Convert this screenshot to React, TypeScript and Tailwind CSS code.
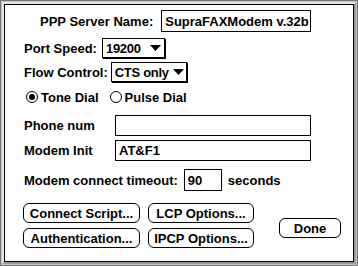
import React from "react";

const font = "font-['Liberation_Sans',Arial,sans-serif] font-bold text-[13px] leading-none text-black";

function Field({ value, className }: { value?: string; className: string }) {
  return (
    <div className={`h-[21px] border border-black bg-white flex items-center pl-[3px] overflow-hidden whitespace-nowrap ${className}`}>
      {value}
    </div>
  );
}

function Popup({ value, className }: { value: string; className: string }) {
  return (
    <div className={`h-[20px] border border-black bg-white shadow-[1px_1px_0_#000] flex items-center justify-between gap-[4px] pl-[3px] pr-[3px] whitespace-nowrap ${className}`}>
      <span className="tracking-[-0.3px]">{value}</span>
      <svg width="11" height="6" viewBox="0 0 11 6" className="shrink-0">
        <path d="M0 0 H11 L5.5 6 Z" fill="#000" />
      </svg>
    </div>
  );
}

function Radio({ checked, label }: { checked?: boolean; label: string }) {
  return (
    <div className="flex items-center gap-[3px]">
      <div className="w-[12px] h-[12px] rounded-full border border-black flex items-center justify-center bg-white">
        {checked && <div className="w-[6px] h-[6px] rounded-full bg-black" />}
      </div>
      <span>{label}</span>
    </div>
  );
}

function Button({ label, className }: { label: string; className: string }) {
  return (
    <div className={`h-[20px] border border-black rounded-[6px] bg-white flex items-center justify-center whitespace-nowrap ${className}`}>
      {label}
    </div>
  );
}

export default function App() {
  return (
    <div className={`w-[358px] h-[266px] ${font}`}>
      <div className="w-full h-full border border-[#777] bg-[#c4c4c4] p-[1px]">
        <div className="w-full h-full border-l-2 border-t-2 border-[#e8e8e8] border-r-2 border-b-2 border-r-[#999] border-b-[#999]">
          <div className="w-full h-full border border-black bg-white flex flex-col">
            {/* server name */}
            <div className="mt-[5px] flex items-center pl-[35px] gap-[8px] h-[22px]">
              <span>PPP Server Name:</span>
              <Field value="SupraFAXModem v.32b" className="w-[150px] h-[22px]" />
            </div>

            {/* port speed */}
            <div className="mt-[6px] flex items-center pl-[19px] gap-[5px] h-[20px]">
              <span>Port Speed:</span>
              <Popup value="19200" className="w-[63px]" />
            </div>

            {/* flow control */}
            <div className="mt-[4px] flex items-center pl-[19px] gap-[3px] h-[20px]">
              <span>Flow Control:</span>
              <Popup value="CTS only" className="w-[76px]" />
            </div>

            {/* dial mode */}
            <div className="mt-[8px] flex items-center pl-[21px] gap-[11px] h-[14px]">
              <Radio checked label="Tone Dial" />
              <Radio label="Pulse Dial" />
            </div>

            <div className="mt-[11px] flex items-center pl-[19px]">
              <span className="w-[91px]">Phone num</span>
              <Field className="w-[196px]" />
            </div>

            <div className="mt-[4px] flex items-center pl-[19px]">
              <span className="w-[91px]">Modem Init</span>
              <Field value="AT&F1" className="w-[196px]" />
            </div>

            <div className="mt-[8px] flex items-center pl-[19px] gap-[6px]">
              <span>Modem connect timeout:</span>
              <Field value="90" className="w-[38px] h-[22px]" />
              <span>seconds</span>
            </div>

            {/* buttons */}
            <div className="mt-[12px] flex pl-[18px]">
              <div className="flex flex-col gap-[5px]">
                <Button label="Connect Script..." className="w-[117px]" />
                <Button label="Authentication..." className="w-[117px]" />
              </div>
              <div className="flex flex-col gap-[5px] ml-[8px]">
                <Button label="LCP Options..." className="w-[106px]" />
                <Button label="IPCP Options..." className="w-[106px]" />
              </div>
              <div className="ml-[25px] mt-[15px]">
                <Button label="Done" className="w-[62px]" />
              </div>
            </div>
          </div>
        </div>
      </div>
    </div>
  );
}
